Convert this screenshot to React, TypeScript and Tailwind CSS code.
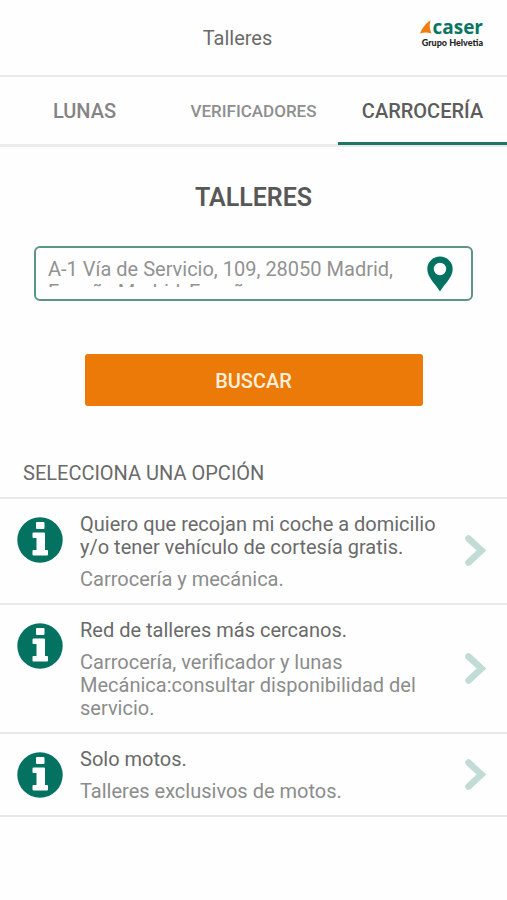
import React from "react";

const tabs = [
  { label: "LUNAS", style: "text-[20px] text-[#848484]", active: false },
  { label: "VERIFICADORES", style: "text-[17px] text-[#8e8e8e]", active: false },
  { label: "CARROCERÍA", style: "text-[20px] text-[#5c5c5c]", active: true },
];

const options = [
  {
    title: "Quiero que recojan mi coche a domicilio y/o tener vehículo de cortesía gratis.",
    lines: ["Carrocería y mecánica."],
  },
  {
    title: "Red de talleres más cercanos.",
    lines: ["Carrocería, verificador y lunas", "Mecánica:consultar disponibilidad del servicio."],
  },
  { title: "Solo motos.", lines: ["Talleres exclusivos de motos."] },
];

function InfoIcon() {
  return (
    <svg viewBox="0 0 46 46" className="mt-[18px] size-[46px] shrink-0" aria-hidden="true">
      <circle cx="23" cy="23" r="22.7" fill="#037260" />
      <path
        fill="#fff"
        d="M20 5h6.500q1 0 1 1v5q0 1-1 1H20q-1 0-1-1V6Q19 5 20 5zM16.500 15.500h10.500q1 0 1 1v16.500h2q1 0 1 1v3.500q0 1-1 1H16.500q-1 0-1-1v-3.500q0-1 1-1h3V21h-3q-1 0-1-1v-3.500q0-1 1-1z"
      />
    </svg>
  );
}

function Chevron() {
  return (
    <svg viewBox="0 0 22 32" className="h-8 w-[22px] shrink-0 self-center" aria-hidden="true">
      <path d="M3.500 3.500 16.500 15.500 3.500 27.500" fill="none" stroke="#c1dcd4" strokeWidth="6.500" strokeLinecap="round" />
    </svg>
  );
}

function Pin() {
  return (
    <svg viewBox="0 0 26 36" className="h-9 w-[26px]" aria-hidden="true">
      <path
        fill="#037260"
        fillRule="evenodd"
        d="M13 .5C6 .5.300 6 .300 13c0 8.500 7.500 14 12.700 22.500C18.200 27 25.700 21.500 25.700 13 25.700 6 20 .5 13 .5zM13 6.800a6.200 6.200 0 1 1 0 12.400 6.200 6.200 0 0 1 0-12.400z"
      />
    </svg>
  );
}

function Logo() {
  return (
    <div className="flex flex-col items-end">
      <div className="flex items-end">
        <svg viewBox="0 0 12 14" className="mb-1 h-[14px] w-3" aria-hidden="true">
          <path fill="#ee7d13" d="M0 13.500C2 8 6 3 10.500.5 9.200 5 9.500 9 11.500 13.500 7.500 12 4 12 0 13.500z" />
        </svg>
        <span className="font-['Open_Sans',sans-serif] text-[19px] leading-[22px] font-bold text-[#087563]">caser</span>
      </div>
      <span className="font-['Lato',sans-serif] text-[9px] leading-[10px] font-black text-[#222]">Grupo Helvetia</span>
    </div>
  );
}

export default function App() {
  return (
    <div className="min-h-screen bg-[#fefefe] font-['Roboto',sans-serif] text-[20px] leading-[23px] text-[#6a6a6a]">
      <header className="grid h-[77px] grid-cols-[1fr_auto_1fr] items-start border-b-2 border-[#e8e8e8]">
        <h1 className="col-start-2 pt-[27px] pr-8">Talleres</h1>
        <div className="flex justify-end pt-4 pr-6">
          <Logo />
        </div>
      </header>

      <nav className="grid h-[70px] grid-cols-3 border-b-3 border-[#ebebeb]" role="tablist">
        {tabs.map((tab) => (
          <button
            key={tab.label}
            type="button"
            role="tab"
            aria-selected={tab.active}
            className={`relative pt-[2px] font-medium ${tab.style}`}
          >
            {tab.label}
            {tab.active && <span className="absolute inset-x-0 -bottom-px h-[3px] bg-[#1f7563]" />}
          </button>
        ))}
      </nav>

      <main>
        <h2 className="pt-[39px] text-center text-[25px] font-semibold text-[#585858]">TALLERES</h2>

        <form onSubmit={(e) => e.preventDefault()}>
          <div className="mx-[34px] mt-[37px] flex h-[55px] items-center rounded-[6px] border-2 border-[#5a9585] pr-[18px] pl-3">
            <textarea
              aria-label="Dirección"
              rows={1}
              className="mb-[2px] h-[29px] min-w-0 flex-1 resize-none overflow-hidden text-[#929292] outline-none"
              defaultValue={"A-1 Vía de Servicio, 109, 28050 Madrid, España,Madrid, España"}
            />
            <button type="button" aria-label="Usar ubicación" className="ml-7">
              <Pin />
            </button>
          </div>
          <button
            type="submit"
            className="mx-auto mt-[53px] block h-[52px] w-2/3 rounded-[3px] bg-[#ec7a08] pt-[2px] font-medium text-[#fff0dc]"
          >
            BUSCAR
          </button>
        </form>

        <h3 className="mt-14 px-[23px] pb-3">SELECCIONA UNA OPCIÓN</h3>
        <ul className="border-t-2 border-[#e8e8e8]">
          {options.map((option) => (
            <li key={option.title} className="border-b-2 border-[#e8e8e8]">
              <button type="button" className="flex w-full items-start pr-5 pl-[17px] text-left">
                <InfoIcon />
                <span className="ml-[17px] min-w-0 flex-1 pt-[14px] pb-3">
                  <span className="block">{option.title}</span>
                  <span className="mt-[9px] block text-[#8c8c8c]">
                    {option.lines.map((line) => (
                      <span key={line} className="block">{line}</span>
                    ))}
                  </span>
                </span>
                <span className="ml-5 flex self-stretch">
                  <Chevron />
                </span>
              </button>
            </li>
          ))}
        </ul>
      </main>
    </div>
  );
}
